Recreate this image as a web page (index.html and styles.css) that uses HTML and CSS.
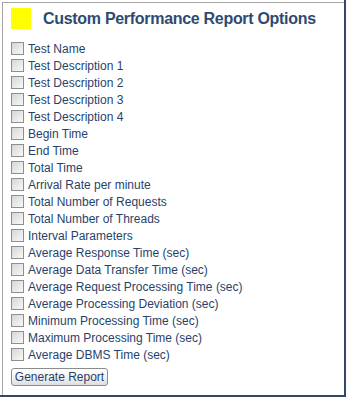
FILE: index.html
```html
<!DOCTYPE html>
<html>
<head>
<meta charset="utf-8">
<link rel="stylesheet" href="styles.css">
</head>
<body>
<div class="frame">
  <div class="panel">
    <div class="header">
      <span class="swatch"></span>
      <h1 class="title">Custom Performance Report Options</h1>
    </div>
    <ul class="options">
      <li class="option"><span class="box"></span><span class="label">Test Name</span></li>
      <li class="option"><span class="box"></span><span class="label">Test Description 1</span></li>
      <li class="option"><span class="box"></span><span class="label">Test Description 2</span></li>
      <li class="option"><span class="box"></span><span class="label">Test Description 3</span></li>
      <li class="option"><span class="box"></span><span class="label">Test Description 4</span></li>
      <li class="option"><span class="box"></span><span class="label">Begin Time</span></li>
      <li class="option"><span class="box"></span><span class="label">End Time</span></li>
      <li class="option"><span class="box"></span><span class="label">Total Time</span></li>
      <li class="option"><span class="box"></span><span class="label">Arrival Rate per minute</span></li>
      <li class="option"><span class="box"></span><span class="label">Total Number of Requests</span></li>
      <li class="option"><span class="box"></span><span class="label">Total Number of Threads</span></li>
      <li class="option"><span class="box"></span><span class="label">Interval Parameters</span></li>
      <li class="option"><span class="box"></span><span class="label">Average Response Time (sec)</span></li>
      <li class="option"><span class="box"></span><span class="label">Average Data Transfer Time (sec)</span></li>
      <li class="option"><span class="box"></span><span class="label">Average Request Processing Time (sec)</span></li>
      <li class="option"><span class="box"></span><span class="label">Average Processing Deviation (sec)</span></li>
      <li class="option"><span class="box"></span><span class="label">Minimum Processing Time (sec)</span></li>
      <li class="option"><span class="box"></span><span class="label">Maximum Processing Time (sec)</span></li>
      <li class="option"><span class="box"></span><span class="label">Average DBMS Time (sec)</span></li>
    </ul>
    <button class="btn" type="button">Generate Report</button>
  </div>
</div>
</body>
</html>
```
FILE: styles.css
```css
html, body {
  margin: 0;
  padding: 0;
  background: #fff;
}
.frame {
  width: 344px;
  height: 395px;
  border-right: 2px solid #33476a;
  border-bottom: 2px solid #33476a;
  overflow: hidden;
}
.panel {
  margin: 2px 0 0 2px;
  height: 393px;
  border-top: 1px solid #a6a6a6;
  border-left: 1px solid #a6a6a6;
  box-sizing: border-box;
  padding: 5px 0 0 8px;
  font-family: "Liberation Sans", Arial, sans-serif;
}
.header {
  display: flex;
  align-items: center;
  height: 21px;
  margin-bottom: 11px;
}
.swatch {
  width: 20px;
  height: 21px;
  background: #ffff00;
  flex: none;
}
.title {
  margin: 0 0 0 12px;
  font-family: "Liberation Sans", Arial, sans-serif;
  font-size: 16px;
  font-weight: bold;
  letter-spacing: -0.3px;
  color: #2e4a72;
  white-space: nowrap;
}
.options {
  list-style: none;
  margin: 0;
  padding: 0;
}
.option {
  display: flex;
  align-items: center;
  height: 17px;
}
.box {
  width: 11px;
  height: 11px;
  border: 1px solid #8e8e8e;
  background: linear-gradient(135deg, #d6d6d6 0%, #eeeeee 70%, #f8f8f8 100%);
  flex: none;
}
.label {
  margin-left: 4px;
  font-size: 12px;
  color: #283f6b;
  white-space: nowrap;
}
.btn {
  display: block;
  margin-top: 5px;
  width: 97px;
  height: 18px;
  padding: 0;
  border: 1px solid #8c8c8c;
  border-radius: 3px;
  background: linear-gradient(#ffffff 0%, #f2f2f2 55%, #dedede 100%);
  font-family: "Liberation Sans", Arial, sans-serif;
  font-size: 12px;
  color: #283f6b;
}
```
